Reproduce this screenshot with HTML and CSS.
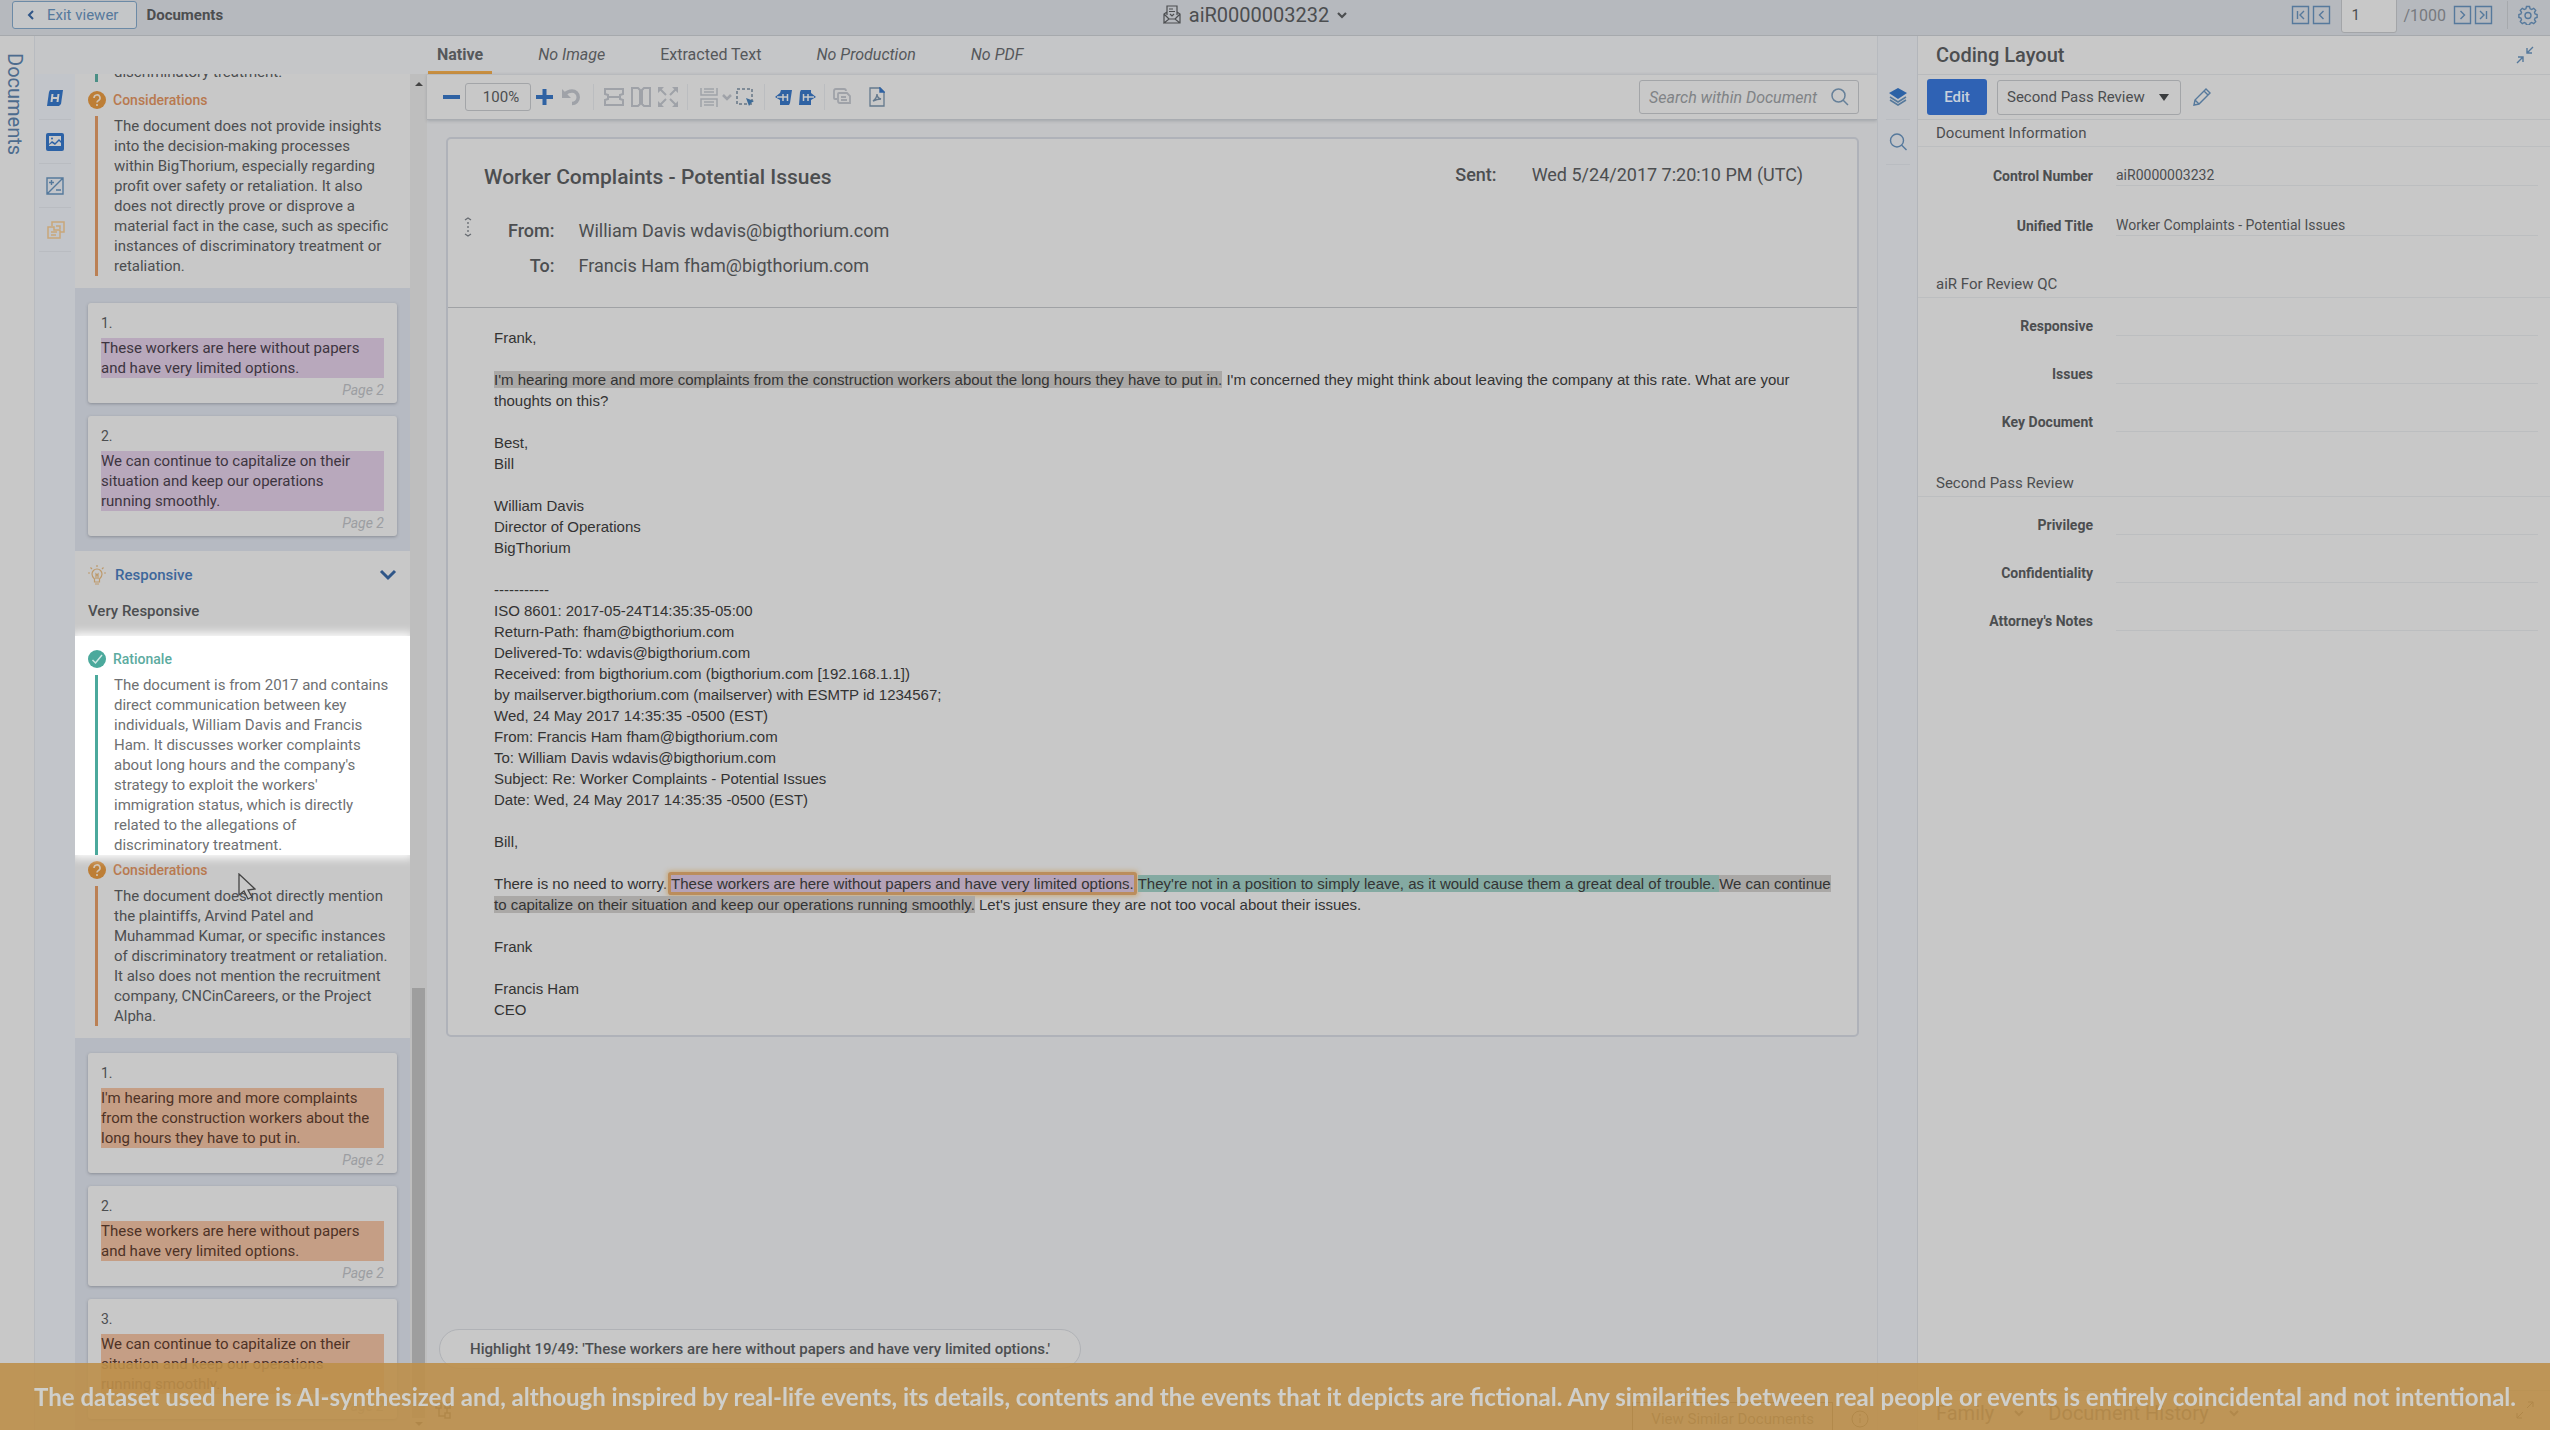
FILE: index.html
```html
<!DOCTYPE html>
<html lang="en">
<head>
  <meta charset="UTF-8" /><meta name="viewport" content="width=device-width, initial-scale=1.0"/>
  <title>aiR0000003232 - Documents</title>
  <link rel="stylesheet" href="styles.css">
</head>
<body>
  <header class="topbar">
    <div class="topbar-left">
      <button class="exit-btn"><svg width="8" height="10" viewBox="0 0 8 10"><path d="M6 1 2 5l4 4" fill="none" stroke="currentColor" stroke-width="2"/></svg>Exit viewer</button>
      <span class="crumb">Documents</span>
    </div>
    <button class="doc-picker">
      <svg width="18" height="20" viewBox="0 0 18 20" fill="none" stroke="currentColor" stroke-width="1.2"><path d="M4 10V1h10v9M1 18V9l3-2M14 7l3 2v9H1l5-4h6l5 4M1 9l5 5M17 9l-5 5M6 4h4M6 6.5h6M7 9l2 2 2-2"/></svg>
      aiR0000003232
      <svg width="10" height="8" viewBox="0 0 10 8"><path d="M1 2l4 4 4-4" fill="none" stroke="currentColor" stroke-width="2.2"/></svg>
    </button>
    <nav class="pager">
      <button class="icon-btn" aria-label="First"><svg width="19" height="20" viewBox="0 0 19 20"><path d="M1.5 1.5h16v17h-16zM6.5 6v8M13 6l-4 4 4 4" /></svg></button>
      <button class="icon-btn" aria-label="Previous"><svg width="19" height="20" viewBox="0 0 19 20"><path d="M1.5 1.5h16v17h-16zM11.5 6l-4 4 4 4" /></svg></button>
      <input class="page-input" type="text" value="1" aria-label="Document number">
      <span class="page-total">/1000</span>
      <button class="icon-btn" aria-label="Next"><svg width="19" height="20" viewBox="0 0 19 20"><path d="M1.5 1.5h16v17h-16zM7.5 6l4 4-4 4" /></svg></button>
      <button class="icon-btn" aria-label="Last"><svg width="19" height="20" viewBox="0 0 19 20"><path d="M1.5 1.5h16v17h-16zM12.5 6v8M6 6l4 4-4 4" /></svg></button>
      <span class="pager-sep"></span>
      <button class="icon-btn" aria-label="Settings"><svg width="20" height="20" viewBox="0 0 20 20"><path d="M8.5 1.5h3l.6 2.3 1.5.7 2.1-1.2 2 2-1.2 2.1.6 1.5 2 .6v3l-2 .6-.6 1.5 1.2 2.1-2 2-2.1-1.2-1.5.7-.6 1.8h-3l-.6-1.8-1.5-.7-2.1 1.2-2-2 1.2-2.1-.6-1.5-2-.6v-3l2-.6.6-1.5-1.2-2.1 2-2 2.1 1.2 1.5-.7z"/><circle cx="10" cy="10.5" r="3"/></svg></button>
    </nav>
  </header>

  <div class="workspace">
    <aside class="doc-rail"><a href="#documents">Documents</a></aside>

    <section class="review">
      <div class="review-head"></div>
      <div class="review-body">
        <nav class="tool-rail">
          <button class="rail-btn" aria-label="Highlights"><svg width="18" height="18" viewBox="0 0 18 18"><path d="M4 1h13l-2 14-2 2H1L3 3z" fill="#2c62a6"/><path d="M6.5 5l-1 8M12.5 5l-1 8M6 9h6" stroke="#c8c8c8" stroke-width="2"/></svg></button>
          <button class="rail-btn" aria-label="Images"><svg width="18" height="18" viewBox="0 0 18 18"><rect width="18" height="18" rx="2" fill="#2c62a6"/><path d="M3 3h12v5l-2-2-4 4-3-2-3 3zM3 13v-1l3-2 3 2 4-4 2 2v3z" fill="#c8c8c8"/><circle cx="6" cy="5.5" r="1" fill="#2c62a6"/></svg></button>
          <button class="rail-btn" aria-label="Adjust"><svg width="18" height="18" viewBox="0 0 18 18" fill="none" stroke="#55799c" stroke-width="1.4"><path d="M1 1h16v16H1zM1 17 17 1M3 5.5h5M5.5 3v5M10 13h5"/></svg></button>
          <button class="rail-btn" aria-label="Review"><svg width="20" height="18" viewBox="0 0 20 18" fill="none" stroke="#c9a679" stroke-width="1.5"><path d="M7 5V1h12v10h-4M3 6h6v3h6v8H3zM6 11h6M6 14h5M11 5h4v3"/></svg></button>
        </nav>

        <div class="analysis">
          <div class="clip-line"><p class="finding-text finding-text--teal">discriminatory treatment.</p></div>
          <article class="finding finding--orange">
            <h3><svg width="18" height="18" viewBox="0 0 18 18"><circle cx="9" cy="9" r="9" fill="#bd7e36"/><path d="M6 7a3 3 0 1 1 4.5 2.5Q9 10.3 9 11.5M9 13v2" fill="none" stroke="#d0c4b5" stroke-width="1.6"/></svg>Considerations</h3>
            <p class="finding-text">The document does not provide insights<br>into the decision-making processes<br>within BigThorium, especially regarding<br>profit over safety or retaliation. It also<br>does not directly prove or disprove a<br>material fact in the case, such as specific<br>instances of discriminatory treatment or<br>retaliation.</p>
          </article>

          <ol class="cites cites--purple">
            <li class="cite"><span class="cite-no">1.</span><q>These workers are here without papers<br>and have very limited options.</q><em>Page 2</em></li>
            <li class="cite"><span class="cite-no">2.</span><q>We can continue to capitalize on their<br>situation and keep our operations<br>running smoothly.</q><em>Page 2</em></li>
          </ol>

          <section class="topic">
            <h2 class="topic-head">
              <svg width="18" height="20" viewBox="0 0 18 20" fill="none" stroke="#bd9a6c" stroke-width="1.2"><path d="M6.5 14q-2.5-2-2.5-5a5 5 0 0 1 10 0q0 3-2.5 5v3h-5zM7 19h4M8 14V9l1 1 1-1v5M9 0v2M0 8h2M16 8h2M2.5 2.5 4 4M15.5 2.5 14 4"/></svg>
              <span>Responsive</span>
              <button class="icon-btn" aria-label="Collapse"><svg class="chevron" width="18" height="12" viewBox="0 0 18 12"><path d="M2 2l7 7 7-7"/></svg></button>
            </h2>
            <p class="verdict">Very Responsive</p>
          </section>

          <article class="finding finding--teal finding--spot">
            <h3><svg width="18" height="18" viewBox="0 0 18 18"><circle cx="9" cy="9" r="9" fill="#4ba99c"/><path d="M4.5 10l3 3L14 5" fill="none" stroke="#cfe8e4" stroke-width="1.5"/></svg>Rationale</h3>
            <p class="finding-text">The document is from 2017 and contains<br>direct communication between key<br>individuals, William Davis and Francis<br>Ham. It discusses worker complaints<br>about long hours and the company's<br>strategy to exploit the workers'<br>immigration status, which is directly<br>related to the allegations of<br>discriminatory treatment.</p>
          </article>
          <article class="finding finding--orange">
            <h3><svg width="18" height="18" viewBox="0 0 18 18"><circle cx="9" cy="9" r="9" fill="#bd7e36"/><path d="M6 7a3 3 0 1 1 4.5 2.5Q9 10.3 9 11.5M9 13v2" fill="none" stroke="#d0c4b5" stroke-width="1.6"/></svg>Considerations</h3>
            <p class="finding-text">The document does not directly mention<br>the plaintiffs, Arvind Patel and<br>Muhammad Kumar, or specific instances<br>of discriminatory treatment or retaliation.<br>It also does not mention the recruitment<br>company, CNCinCareers, or the Project<br>Alpha.</p>
            <svg class="cursor" width="18" height="28" viewBox="0 0 18 28"><path d="M1 1v21l5-4 4 8 4-2-4-7 7-1z" fill="#c8c8c8" stroke="#444" stroke-width="1.3"/></svg>
          </article>

          <ol class="cites cites--orange">
            <li class="cite"><span class="cite-no">1.</span><q>I'm hearing more and more complaints<br>from the construction workers about the<br>long hours they have to put in.</q><em>Page 2</em></li>
            <li class="cite"><span class="cite-no">2.</span><q>These workers are here without papers<br>and have very limited options.</q><em>Page 2</em></li>
            <li class="cite"><span class="cite-no">3.</span><q>We can continue to capitalize on their<br>situation and keep our operations<br>running smoothly.</q><em>Page 2</em></li>
          </ol>
        </div>
        <div class="scrollbar"><span class="arrow-up"></span><span class="thumb"></span><span class="arrow-down"></span></div>
      </div>
    </section>

    <main class="viewer">
      <nav class="tabs">
        <a class="active" href="#native">Native</a>
        <a class="missing" href="#image">No Image</a>
        <a href="#text">Extracted Text</a>
        <a class="missing" href="#production">No Production</a>
        <a class="missing" href="#pdf">No PDF</a>
      </nav>

      <div class="toolbar">
        <div class="tools">
          <button class="icon-btn" aria-label="Zoom out"><svg width="17" height="18" viewBox="0 0 17 18"><path d="M0 9h17" stroke="#2f62a3" stroke-width="4"/></svg></button>
          <input class="zoom-input" type="text" value="100%" aria-label="Zoom">
          <button class="icon-btn" aria-label="Zoom in"><svg width="17" height="18" viewBox="0 0 17 18"><path d="M0 9h17M8.5 1v16" stroke="#2f62a3" stroke-width="4"/></svg></button>
        </div>
        <div class="tools">
          <button class="icon-btn muted" aria-label="Rotate"><svg width="20" height="20" viewBox="0 0 20 20"><path d="M4 7q3-3 7-3a6 6 0 0 1 0 12.5" stroke-width="3.5"/><path d="M1 2v9h9z" fill="#9fa2a8" stroke="none"/></svg></button>
        </div>
        <div class="tools">
          <button class="icon-btn muted" aria-label="Fit width"><svg width="20" height="20" viewBox="0 0 20 20"><path d="M1 7V2h18v5l-3 1v4l3 1v5H1v-5l3-1V8zM5 10h10" stroke-width="2"/></svg></button>
          <button class="icon-btn muted" aria-label="Fit height"><svg width="20" height="20" viewBox="0 0 20 20"><path d="M7 1H1v18h6l2-2V3zM13 1h6v18h-6l-2-2V3z" stroke-width="2"/></svg></button>
          <button class="icon-btn muted" aria-label="Full size"><svg width="20" height="20" viewBox="0 0 20 20"><path d="M2 2l6 6M18 2l-6 6M2 18l6-6M18 18l-6-6" stroke-width="2"/><path d="M0 0h6L0 6zM20 0h-6l6 6zM0 20h6l-6-6zM20 20h-6l6-6z" fill="#9fa2a8" stroke="none"/></svg></button>
        </div>
        <div class="tools tools--tight">
          <button class="icon-btn muted" aria-label="Layout"><svg width="18" height="20" viewBox="0 0 18 20"><path d="M1 1v7h16V1M4 2h10M4 5h10M1 20v-8h16v8M4 15h10M4 18h10" stroke-width="1.5"/></svg></button>
          <button class="icon-btn muted" aria-label="Layout options"><svg width="10" height="8" viewBox="0 0 10 8"><path d="M1 2l4 4 4-4" stroke-width="2.5"/></svg></button>
          <button class="icon-btn" aria-label="Select area"><svg width="18" height="18" viewBox="0 0 18 18"><path d="M1 1h15v15H1z" stroke="#667585" stroke-width="1.5" stroke-dasharray="3 2"/><path d="M10 10l8 3-3 2-2 3z" fill="#3c6b98" stroke="none"/></svg></button>
        </div>
        <div class="tools tools--jump">
          <button class="icon-btn" aria-label="Previous highlight"><svg width="17" height="18" viewBox="0 0 17 18"><path d="M6 2h11l-2 13-1 2H5V12L0 9l5-4z" fill="#2f62a3" stroke="none"/><path d="M8 6v7M12.5 6v7M2 9h11" stroke="#c8c8c8" stroke-width="1.5"/></svg></button>
          <button class="icon-btn" aria-label="Next highlight"><svg width="17" height="18" viewBox="0 0 17 18"><path d="M2 2h10v3l5 4-5 3v5H0L1 4z" fill="#2f62a3" stroke="none"/><path d="M4.5 6v7M9 6v7M5 9h10" stroke="#c8c8c8" stroke-width="1.5"/></svg></button>
        </div>
        <div class="tools tools--wide">
          <button class="icon-btn muted" aria-label="Copy"><svg width="18" height="18" viewBox="0 0 18 18"><path d="M4 11H2q-1 0-1-1V3q0-2 2-2h8q2 0 2 2M5 6q0-1 1-1h8l3 3v7H7q-2 0-2-2zM8 9h5M8 12h6" stroke-width="1.8"/></svg></button>
          <button class="icon-btn" aria-label="Save as PDF"><svg width="16" height="20" viewBox="0 0 16 20"><path d="M1 1h10l4 4v14H1z" stroke="#64798d" stroke-width="1.3"/><path d="M11 1l4 4h-4z" fill="#2f62a3" stroke="#2f62a3"/><path d="M4 14q4-3 4-7 0 4 4 5-4 0-8 2z" stroke="#64798d"/></svg></button>
        </div>
        <label class="search">
          <input type="text" placeholder="Search within Document" aria-label="Search within Document">
          <svg width="18" height="18" viewBox="0 0 18 18" fill="none" stroke="#668099" stroke-width="1.5"><circle cx="7.5" cy="7.5" r="6.5"/><path d="M12 12l5 5"/></svg>
        </label>
      </div>

      <div class="canvas">
        <article class="mail">
          <header class="mail-head">
            <div class="mail-top">
              <h1>Worker Complaints - Potential Issues</h1>
              <p class="sent"><b>Sent:</b><span>Wed 5/24/2017 7:20:10 PM (UTC)</span></p>
            </div>
            <div class="mail-people">
              <svg width="8" height="20" viewBox="0 0 8 20" fill="none" stroke="#666a70" stroke-width="1.3"><path d="M1 3l3-2 3 2M1 17l3 2 3-2M4 5v2M4 9v2M4 13v2"/></svg>
              <dl>
                <dt>From:</dt><dd>William Davis wdavis@bigthorium.com</dd>
                <dt>To:</dt><dd>Francis Ham fham@bigthorium.com</dd>
              </dl>
            </div>
          </header>
          <div class="mail-body">
            <p>Frank,</p>
            <p><mark>I'm hearing more and more complaints from the construction workers about the long hours they have to put in.</mark> I'm concerned they might think about leaving the company at this rate. What are your<br>thoughts on this?</p>
            <p>Best,<br>Bill</p>
            <p>William Davis<br>Director of Operations<br>BigThorium</p>
            <p>-----------<br>ISO 8601: 2017-05-24T14:35:35-05:00<br>Return-Path: fham@bigthorium.com<br>Delivered-To: wdavis@bigthorium.com<br>Received: from bigthorium.com (bigthorium.com [192.168.1.1])<br>by mailserver.bigthorium.com (mailserver) with ESMTP id 1234567;<br>Wed, 24 May 2017 14:35:35 -0500 (EST)<br>From: Francis Ham fham@bigthorium.com<br>To: William Davis wdavis@bigthorium.com<br>Subject: Re: Worker Complaints - Potential Issues<br>Date: Wed, 24 May 2017 14:35:35 -0500 (EST)</p>
            <p>Bill,</p>
            <p>There is no need to worry. <mark class="current">These workers are here without papers and have very limited options.</mark> <mark class="teal">They're not in a position to simply leave, as it would cause them a great deal of trouble. </mark><mark>We can continue<br>to capitalize on their situation and keep our operations running smoothly.</mark> Let's just ensure they are not too vocal about their issues.</p>
            <p>Frank</p>
            <p>Francis Ham<br>CEO</p>
          </div>
        </article>
        <p class="toast">Highlight 19/49: 'These workers are here without papers and have very limited options.'</p>
      </div>

      <footer class="viewer-foot">
        <svg width="16" height="18" viewBox="0 0 16 18" fill="none" stroke="#444" stroke-width="1.5"><path d="M1 1h5v5H1zM10 1h5v5h-5zM10 11h5v5h-5zM4 6v8h6M12 6v5"/></svg>
        <div class="foot-right">
          <button class="similar-btn">View Similar Documents</button>
          <svg width="18" height="18" viewBox="0 0 18 18" fill="none" stroke="#444"><circle cx="9" cy="9" r="8"/><path d="M9 8v5M9 4v2"/></svg>
        </div>
      </footer>
    </main>

    <nav class="side-rail">
      <button class="icon-btn" aria-label="Layers"><svg width="18" height="18" viewBox="0 0 18 18"><path d="M1 9l8 5 8-5M1 12l8 5 8-5" stroke-width="1.5"/><path d="M9 0l9 5-9 6-9-6z" fill="#2c62a6" stroke="none"/></svg></button>
      <button class="icon-btn" aria-label="Search"><svg width="18" height="18" viewBox="0 0 18 18"><circle cx="8" cy="7.5" r="6.5"/><path d="M12.5 12l5 5"/></svg></button>
    </nav>

    <aside class="coding">
      <div class="coding-head">
        <h2>Coding Layout</h2>
        <button class="icon-btn" aria-label="Collapse pane"><svg width="18" height="18" viewBox="0 0 18 18"><path d="M17 1l-6 6M11 2v5h5M1 17l6-6M2 11h5v5"/></svg></button>
      </div>
      <div class="coding-bar">
        <button class="edit-btn">Edit</button>
        <div class="select-wrap">
          <select aria-label="Layout"><option>Second Pass Review</option></select>
        </div>
        <button class="icon-btn" aria-label="Edit layout"><svg width="18" height="18" viewBox="0 0 18 18"><path d="M1 17l1-5L13 1l4 4L6 16zM11 3l4 4M2 12l4 4"/></svg></button>
      </div>
      <h3>Document Information</h3>
      <dl class="fields fields--filled">
        <dt>Control Number</dt><dd>aiR0000003232</dd>
        <dt>Unified Title</dt><dd>Worker Complaints - Potential Issues</dd>
      </dl>
      <h3>aiR For Review QC</h3>
      <dl class="fields">
        <dt>Responsive</dt><dd></dd>
        <dt>Issues</dt><dd></dd>
        <dt>Key Document</dt><dd></dd>
      </dl>
      <h3>Second Pass Review</h3>
      <dl class="fields">
        <dt>Privilege</dt><dd></dd>
        <dt>Confidentiality</dt><dd></dd>
        <dt>Attorney's Notes</dt><dd></dd>
      </dl>
      <footer class="coding-foot">
        <button>Family <svg width="10" height="8" viewBox="0 0 10 8"><path d="M1 2l4 4 4-4" fill="none" stroke="currentColor" stroke-width="2"/></svg></button>
        <button>Document History <svg width="10" height="8" viewBox="0 0 10 8"><path d="M1 2l4 4 4-4" fill="none" stroke="currentColor" stroke-width="2"/></svg></button>
        <svg class="expand" width="18" height="18" viewBox="0 0 18 18" fill="none" stroke="#444"><path d="M11 7l6-6M12 1h5v5M7 11l-6 6M1 12v5h5"/></svg>
      </footer>
    </aside>
  </div>

  <p class="notice">The dataset used here is AI-synthesized and, although inspired by real-life events, its details, contents and the events that it depicts are fictional. Any similarities between real people or events is entirely coincidental and not intentional.</p>
</body>
</html>
```
FILE: styles.css
```css
* { box-sizing: border-box; margin: 0; padding: 0; }

body {
  display: flex;
  flex-direction: column;
  height: 100vh;
  overflow: hidden;
  background: #c8c8c8;
  color: #4c4e50;
  font-family: Roboto, sans-serif;
  font-size: 15px;
}

button {
  background: none;
  border: none;
  color: inherit;
  font: inherit;
  cursor: pointer;
}

input, select {
  background: #c8c8c8;
  border: 1px solid #a3a5a8;
  border-radius: 3px;
  color: #4c4e50;
  font: inherit;
}

svg { display: block; flex: none; }

.icon-btn svg {
  fill: none;
  stroke: #56799c;
  stroke-width: 1.4;
}

.icon-btn.muted svg { stroke: #9fa2a8; }

.icon-btn .chevron {
  stroke: #2f5688;
  stroke-width: 3;
}

/* top bar */
.topbar {
  display: grid;
  grid-template-columns: 1fr auto 1fr;
  align-items: center;
  height: 36px;
  padding: 0 12px 6px;
  background: #b6b9be;
  border-bottom: 1px solid #a6a9ad;
}

.topbar-left {
  display: flex;
  align-items: center;
  gap: 9px;
}

.exit-btn {
  display: flex;
  align-items: center;
  gap: 12px;
  height: 28px;
  padding: 0 18px 0 14px;
  background: #c4c6c8;
  border: 1px solid #6c8aa6;
  border-radius: 3px;
  color: #56799c;
}

.exit-btn svg { color: #2f5688; }

.crumb { font-weight: 700; }

.doc-picker {
  display: flex;
  align-items: center;
  gap: 8px;
  margin-right: 40px;
  font-size: 20px;
}

.pager {
  display: flex;
  align-items: center;
  justify-content: flex-end;
  gap: 2px;
  height: 30px;
}

.page-input {
  width: 56px;
  height: 36px;
  margin: 0 4px 0 8px;
  padding: 0 9px;
}

.page-total {
  margin-right: 5px;
  color: #777a7e;
  font-size: 16px;
}

.pager-sep {
  width: 1px;
  height: 28px;
  margin: 0 8px 0 12px;
  background: #a6a9ad;
}

/* columns */
.workspace {
  display: flex;
  flex: 1;
  min-height: 0;
}

.doc-rail {
  width: 35px;
  padding: 17px 3px;
  border-right: 1px solid #b8bbc0;
}

.doc-rail a {
  color: #4d6c8e;
  font-size: 20px;
  text-decoration: none;
  writing-mode: vertical-rl;
}

.review {
  display: flex;
  flex-direction: column;
  width: 392px;
}

.review-head {
  height: 38px;
  background: #c5c6c8;
}

.review-body {
  display: flex;
  flex: 1;
  min-height: 0;
}

.tool-rail {
  width: 40px;
  padding: 2px 4px;
  background: #c2c5ca;
}

.rail-btn {
  display: flex;
  align-items: center;
  justify-content: center;
  width: 32px;
  height: 44px;
  border-bottom: 1px solid #b9bcc1;
}

/* review results */
.analysis {
  flex: 1;
  overflow: hidden;
  background: #b6bac2;
}

.clip-line {
  display: flex;
  align-items: flex-end;
  height: 8px;
  padding-left: 20px;
  background: #c8c8c8;
  overflow: hidden;
}

.finding {
  position: relative;
  padding: 9px 13px 0;
  background: #c8c8c8;
}

.finding h3 {
  display: flex;
  align-items: center;
  gap: 7px;
  height: 18px;
  color: #b8794f;
  font-size: 14px;
  font-weight: 500;
}

.finding-text {
  margin: 7px 0 0 7px;
  padding-left: 16px;
  border-left: 3px solid #bb8054;
  line-height: 20px;
  white-space: nowrap;
}

.finding-text--teal {
  margin: 0;
  border-color: #4a8f86;
}

.finding--orange { padding-bottom: 12px; }

.finding--teal .finding-text { border-color: #4ba99c; }
.finding--teal h3 { color: #5cab9f; }

.finding--spot {
  z-index: 1;
  padding-top: 14px;
  background: #fff;
  box-shadow: 0 0 9px 3px #fff;
  color: #6e7072;
}

.finding--spot + .finding { padding-top: 6px; }

.cursor {
  position: absolute;
  top: 18px;
  left: 163px;
}

.cites {
  display: flex;
  flex-direction: column;
  gap: 13px;
  padding: 15px 13px;
  list-style: none;
}

.cite {
  display: flex;
  flex-direction: column;
  padding: 12px 13px 1px;
  background: #c8c8c8;
  border-radius: 3px;
  box-shadow: 0 1px 3px rgba(70, 75, 85, 0.4);
  white-space: nowrap;
}

.cite-no {
  margin-bottom: 7px;
  font-size: 14px;
  line-height: 16px;
}

.cite q {
  color: #3d3540;
  line-height: 20px;
  quotes: none;
}

.cites--purple q { background: #b8a8bc; }
.cites--orange q { background: #c59e85; color: #4d3226; }

.cite em {
  align-self: flex-end;
  color: #9c9ea2;
  font-size: 14px;
  line-height: 24px;
}

.topic {
  padding: 13px 13px 15px;
  background: #c8c8c8;
}

.topic-head {
  display: flex;
  align-items: center;
  gap: 9px;
  height: 22px;
  color: #3d679b;
  font-size: 15px;
  font-weight: 500;
}

.topic-head span { flex: 1; }

.verdict {
  margin-top: 15px;
  font-weight: 500;
  line-height: 20px;
}

.scrollbar {
  display: flex;
  flex-direction: column;
  align-items: center;
  width: 17px;
  padding: 8px 0 4px;
  background: #bebebe;
}

.arrow-up, .arrow-down {
  border: 4px solid transparent;
  border-top: none;
  border-bottom: 4px solid #444;
}

.arrow-down { transform: rotate(180deg); }

.thumb {
  width: 13px;
  height: 32%;
  margin: auto 0 4px;
  background: #9e9e9e;
}

/* viewer */
.viewer {
  display: flex;
  flex: 1;
  flex-direction: column;
  min-width: 0;
  background: #c3c4c6;
}

.tabs {
  display: flex;
  gap: 37px;
  height: 38px;
  padding-left: 1px;
  background: #c5c6c8;
  font-size: 16px;
}

.tabs a {
  padding: 9px 9px 0;
  border-bottom: 3px solid transparent;
  color: #55585b;
  line-height: 20px;
  text-decoration: none;
}

.tabs .missing { font-style: italic; }

.tabs .active {
  border-color: #c98f3f;
  font-weight: 700;
}

.toolbar {
  display: flex;
  align-items: center;
  height: 46px;
  padding: 0 18px 0 9px;
  background: #c8c8c8;
  border-top: 1px solid #b8babd;
  border-bottom: 1px solid #a9acb1;
  box-shadow: 0 1px 3px rgba(90, 95, 110, 0.3);
}

.tools {
  display: flex;
  align-items: center;
  gap: 7px;
  height: 26px;
  padding: 0 12px 0 8px;
  border-right: 1px solid #bbbdc0;
}

.tools:first-child {
  gap: 5px;
  padding: 0 0 0 7px;
  border: none;
}

.tools:nth-child(3) { padding: 0 9px 0 10px; }
.tools.tools--tight { gap: 4px; padding: 0 10px 0 12px; }
.tools.tools--jump { padding: 0 8px 0 10px; }
.tools.tools--wide { gap: 18px; border: none; }

.zoom-input {
  width: 66px;
  height: 28px;
  padding-left: 6px;
  text-align: center;
}

.search {
  display: flex;
  align-items: center;
  width: 220px;
  height: 34px;
  margin-left: auto;
  padding: 0 10px 0 9px;
  border: 1px solid #a3a5a8;
  border-radius: 3px;
}

.search input {
  width: 182px;
  background: none;
  border: none;
  font-size: 16px;
}

.search input::placeholder {
  color: #808386;
  font-style: italic;
}

.canvas {
  display: flex;
  flex: 1;
  flex-direction: column;
  align-items: flex-start;
  justify-content: space-between;
  min-height: 0;
  padding: 17px 18px 25px 12px;
}

.mail {
  align-self: stretch;
  margin-left: 7px;
  background: #c8c8c8;
  border: 2px solid #afb2b9;
  border-radius: 5px;
}

.mail-head {
  height: 169px;
  border-bottom: 1px solid #a0a2a5;
}

.mail-top {
  display: flex;
  align-items: flex-start;
  justify-content: space-between;
  padding: 24px 54px 0 36px;
}

.mail-top h1 {
  font-size: 21px;
  font-weight: 500;
  line-height: 28px;
}

.sent {
  display: flex;
  gap: 35px;
  font-size: 18px;
  line-height: 24px;
}

.sent b { font-weight: 500; }

.mail-people {
  display: flex;
  align-items: flex-start;
  gap: 36px;
  padding: 26px 16px;
}

.mail-people dl {
  display: grid;
  grid-template-columns: auto auto;
  column-gap: 24px;
  row-gap: 7px;
  font-size: 18px;
  line-height: 28px;
}

.mail-people dt { font-weight: 500; text-align: right; }

.mail-body {
  display: flex;
  flex-direction: column;
  gap: 21px;
  padding: 19px 20px 15px 46px;
  color: #333;
  font-family: "Liberation Sans", Arial, sans-serif;
  font-size: 15px;
  line-height: 21px;
  white-space: nowrap;
}

mark { background: #aaa8a6; color: inherit; }
mark.teal { background: #84aaa2; }

mark.current {
  background: #b5a3b8;
  border-radius: 1px;
  box-shadow: 0 0 0 3px #bb8d5c, 0 0 5px 4px #c8a878;
}

.toast {
  padding: 10px 30px;
  background: #c8c8c8;
  border: 1px solid #b0b2b6;
  border-radius: 20px;
  font-weight: 500;
  line-height: 18px;
}

.viewer-foot {
  display: flex;
  align-items: flex-start;
  justify-content: space-between;
  height: 36px;
  padding: 8px 8px 0;
}

.foot-right {
  display: flex;
  align-items: center;
  gap: 18px;
}

.similar-btn {
  height: 34px;
  padding: 0 18px;
  border: 1px solid #555;
}

/* right side */
.side-rail {
  display: flex;
  flex-direction: column;
  align-items: center;
  width: 41px;
  padding-top: 39px;
  background: #c2c4c8;
  border-left: 1px solid #b7babf;
  border-right: 1px solid #b3b6bb;
}

.side-rail .icon-btn {
  display: flex;
  align-items: center;
  justify-content: center;
  width: 24px;
  height: 45px;
  border-bottom: 1px solid #b9bcc1;
}

.coding {
  display: flex;
  flex-direction: column;
  width: 632px;
}

.coding-head {
  display: flex;
  align-items: center;
  justify-content: space-between;
  height: 39px;
  padding: 0 16px 0 18px;
  border-bottom: 1px solid #b9bbbd;
}

.coding-head h2 {
  font-size: 20px;
  font-weight: 500;
}

.coding-bar {
  display: flex;
  align-items: center;
  gap: 10px;
  height: 45px;
  padding: 0 9px;
  border-bottom: 1px solid #b9bbbd;
}

.edit-btn {
  width: 60px;
  height: 36px;
  background: #2f62b4;
  border-radius: 3px;
  color: #c8d0dc;
  font-weight: 500;
}

.select-wrap { position: relative; }

.select-wrap select {
  width: 184px;
  height: 35px;
  padding: 0 9px;
  appearance: none;
}

.select-wrap::after {
  content: "";
  position: absolute;
  top: 14px;
  right: 12px;
  border: 5px solid transparent;
  border-top: 7px solid #3a3c3e;
  border-bottom: none;
  pointer-events: none;
}

.select-wrap + .icon-btn { margin-left: 2px; }

.coding h3 {
  padding: 0 18px;
  border-bottom: 1px solid #bcbec0;
  font-size: 15px;
  font-weight: 400;
  line-height: 26px;
}

.fields {
  display: grid;
  grid-template-columns: 175px 1fr;
  grid-auto-rows: 48px;
  column-gap: 23px;
  padding: 4px 12px 24px 0;
  font-size: 14px;
  line-height: 18px;
}

.fields--filled { grid-auto-rows: 50px; padding-bottom: 20px; }

.fields dt {
  align-self: center;
  font-weight: 700;
  text-align: right;
}

.fields dd {
  align-self: center;
  height: 20px;
  border-bottom: 1px solid #bcbec0;
}

.coding-foot {
  display: flex;
  align-items: flex-start;
  gap: 24px;
  height: 40px;
  margin-top: auto;
  padding: 10px 16px 0 18px;
  border-top: 1px solid #b0b2b5;
  font-size: 20px;
}

.coding-foot button {
  display: flex;
  align-items: center;
  gap: 20px;
}

.expand { margin-left: auto; }

/* notice across the bottom */
.notice {
  position: fixed;
  right: 0;
  bottom: 0;
  left: 0;
  z-index: 2;
  background: rgba(189, 143, 74, 0.9);
  color: #cfcfcb;
  font-family: Lato, sans-serif;
  font-size: 24px;
  font-weight: 700;
  line-height: 67px;
  text-align: center;
  white-space: nowrap;
}
```
